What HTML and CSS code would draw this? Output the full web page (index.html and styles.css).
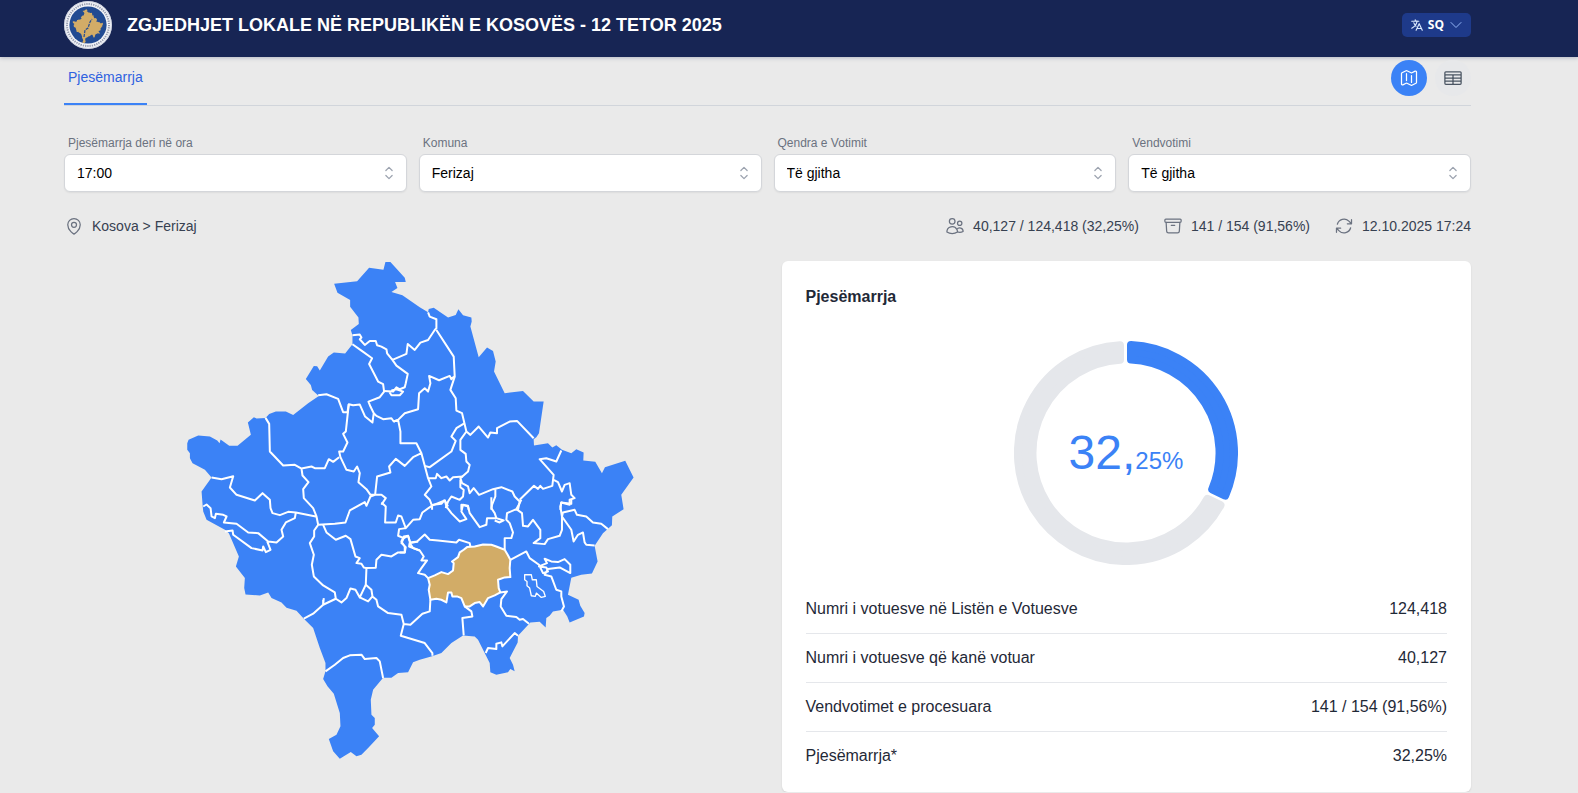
FILE: index.html
```html
<!DOCTYPE html>
<html lang="sq">
<head>
<meta charset="utf-8">
<meta name="viewport" content="width=device-width, initial-scale=1">
<title>Zgjedhjet Lokale në Republikën e Kosovës</title>
<link rel="stylesheet" href="styles.css">
</head>
<body>
<header class="header">
  <svg class="logo" viewBox="-24 -24 48 48" role="img" aria-label="Logo">
    <circle r="24" fill="#f3f4f8"/>
    <circle r="21" fill="none" stroke="#59627f" stroke-width="2" stroke-dasharray="1.3 1" opacity=".6"/>
    <circle r="23.4" fill="none" stroke="#b9bfd0" stroke-width=".6"/>
    <circle r="18.6" fill="#224b92"/>
    <g transform="translate(-15.8 -16.5) scale(.0227)"><use href="#kosovo" fill="#d2ac67"/></g>
    <path d="M-4 12l1-7 3-2 2-6 2-3" fill="none" stroke="#224b92" stroke-width="1.2" stroke-dasharray="3 1"/>
  </svg>
  <h1 class="title">ZGJEDHJET LOKALE NË REPUBLIKËN E KOSOVËS - 12 TETOR 2025</h1>
  <button class="lang" type="button" aria-haspopup="listbox">
    <svg class="icon lang-icon" viewBox="0 0 24 24"><path d="m10.5 21 5.25-11.25L21 21m-9-3h7.5M3 5.621a48.474 48.474 0 0 1 6-.371m0 0c1.12 0 2.233.038 3.334.114M9 5.25V3m3.334 2.364C11.176 10.658 7.69 15.08 3 17.502m9.334-12.138c.896.061 1.785.147 2.666.257m-4.589 8.495a18.023 18.023 0 0 1-3.827-5.802"/></svg>
    <span>SQ</span>
    <svg class="icon lang-chevron" viewBox="0 0 24 24"><path d="m19.5 8.25-7.5 7.5-7.5-7.5"/></svg>
  </button>
</header>
<main class="page">
  <div class="toolbar">
    <nav class="tabs"><a class="tab" href="#turnout">Pjesëmarrja</a></nav>
    <div class="views">
      <button class="view view-active" type="button" aria-label="Harta"><svg class="icon" viewBox="0 0 24 24"><path d="M9 6.75V15m6-6v8.25m.503 3.498 4.875-2.437c.381-.19.622-.58.622-1.006V4.82c0-.836-.88-1.38-1.628-1.006l-3.869 1.934c-.317.159-.69.159-1.006 0L9.503 3.252a1.125 1.125 0 0 0-1.006 0L3.622 5.689C3.24 5.88 3 6.27 3 6.695V19.18c0 .836.88 1.38 1.628 1.006l3.869-1.934c.317-.159.69-.159 1.006 0l4.994 2.497c.317.158.69.158 1.006 0Z"/></svg></button>
      <button class="view" type="button" aria-label="Tabela"><svg class="icon" viewBox="0 0 24 24"><path d="M3.375 19.5h17.25m-17.25 0a1.125 1.125 0 0 1-1.125-1.125M3.375 19.5h7.5c.621 0 1.125-.504 1.125-1.125m-9.75 0V5.625m0 12.75v-1.5c0-.621.504-1.125 1.125-1.125m18.375 2.625V5.625m0 12.75c0 .621-.504 1.125-1.125 1.125m1.125-1.125v-1.5c0-.621-.504-1.125-1.125-1.125m0 3.75h-7.5A1.125 1.125 0 0 1 12 18.375m9.75-12.75c0-.621-.504-1.125-1.125-1.125H3.375c-.621 0-1.125.504-1.125 1.125m19.5 0v1.5c0 .621-.504 1.125-1.125 1.125M2.25 5.625v1.5c0 .621.504 1.125 1.125 1.125m0 0h17.25m-17.25 0h7.5c.621 0 1.125.504 1.125 1.125M3.375 8.25c-.621 0-1.125.504-1.125 1.125v1.5c0 .621.504 1.125 1.125 1.125m17.25-3.75h-7.5c-.621 0-1.125.504-1.125 1.125m8.625-1.125c.621 0 1.125.504 1.125 1.125v1.5c0 .621-.504 1.125-1.125 1.125m-17.25 0h7.5m-7.5 0c-.621 0-1.125.504-1.125 1.125v1.5c0 .621.504 1.125 1.125 1.125M12 10.875v-1.5m0 1.5c0 .621-.504 1.125-1.125 1.125M12 10.875c0 .621.504 1.125 1.125 1.125m-2.25 0c.621 0 1.125.504 1.125 1.125M13.125 12h7.5m-7.5 0c-.621 0-1.125.504-1.125 1.125M20.625 12c.621 0 1.125.504 1.125 1.125v1.5c0 .621-.504 1.125-1.125 1.125m-17.25 0h7.5M12 14.625v-1.5m0 1.5c0 .621-.504 1.125-1.125 1.125M12 14.625c0 .621.504 1.125 1.125 1.125m-2.25 0c.621 0 1.125.504 1.125 1.125m0 1.5v-1.5m0 0c0-.621.504-1.125 1.125-1.125m0 0h7.5"/></svg></button>
    </div>
  </div>

  <form class="filters">
    <div class="field"><label for="hour">Pjesëmarrja deri në ora</label>
      <div class="control"><select id="hour"><option>17:00</option></select><svg class="icon updown" viewBox="0 0 24 24"><path d="M8.25 15 12 18.75 15.75 15m-7.5-6L12 5.25 15.75 9"/></svg></div></div>
    <div class="field"><label for="municipality">Komuna</label>
      <div class="control"><select id="municipality"><option>Ferizaj</option></select><svg class="icon updown" viewBox="0 0 24 24"><path d="M8.25 15 12 18.75 15.75 15m-7.5-6L12 5.25 15.75 9"/></svg></div></div>
    <div class="field"><label for="center">Qendra e Votimit</label>
      <div class="control"><select id="center"><option>Të gjitha</option></select><svg class="icon updown" viewBox="0 0 24 24"><path d="M8.25 15 12 18.75 15.75 15m-7.5-6L12 5.25 15.75 9"/></svg></div></div>
    <div class="field"><label for="station">Vendvotimi</label>
      <div class="control"><select id="station"><option>Të gjitha</option></select><svg class="icon updown" viewBox="0 0 24 24"><path d="M8.25 15 12 18.75 15.75 15m-7.5-6L12 5.25 15.75 9"/></svg></div></div>
  </form>

  <div class="summary">
    <div class="fact place"><svg class="icon" viewBox="0 0 24 24"><path d="M15 10.5a3 3 0 1 1-6 0 3 3 0 0 1 6 0Z"/><path d="M19.5 10.5c0 7.142-7.5 11.25-7.5 11.25S4.5 17.642 4.5 10.5a7.5 7.5 0 1 1 15 0Z"/></svg><span>Kosova &gt; Ferizaj</span></div>
    <div class="fact"><svg class="icon" viewBox="0 0 24 24"><path d="M15 19.128a9.38 9.38 0 0 0 2.625.372 9.337 9.337 0 0 0 4.121-.952 4.125 4.125 0 0 0-7.533-2.493M15 19.128v-.003c0-1.113-.285-2.16-.786-3.07M15 19.128v.106A12.318 12.318 0 0 1 8.624 21c-2.331 0-4.512-.645-6.374-1.766l-.001-.109a6.375 6.375 0 0 1 11.964-3.07M12 6.375a3.375 3.375 0 1 1-6.75 0 3.375 3.375 0 0 1 6.75 0Zm8.25 2.25a2.625 2.625 0 1 1-5.25 0 2.625 2.625 0 0 1 5.25 0Z"/></svg><span>40,127 / 124,418 (32,25%)</span></div>
    <div class="fact"><svg class="icon" viewBox="0 0 24 24"><path d="m20.25 7.5-.625 10.632a2.25 2.25 0 0 1-2.247 2.118H6.622a2.25 2.25 0 0 1-2.247-2.118L3.75 7.5M10 11.25h4M3.375 7.5h17.25c.621 0 1.125-.504 1.125-1.125v-1.5c0-.621-.504-1.125-1.125-1.125H3.375c-.621 0-1.125.504-1.125 1.125v1.5c0 .621.504 1.125 1.125 1.125Z"/></svg><span>141 / 154 (91,56%)</span></div>
    <div class="fact"><svg class="icon" viewBox="0 0 24 24"><path d="M16.023 9.348h4.992v-.001M2.985 19.644v-4.992m0 0h4.992m-4.993 0 3.181 3.183a8.25 8.25 0 0 0 13.803-3.7M4.031 9.865a8.25 8.25 0 0 1 13.803-3.7l3.181 3.182m0-4.991v4.99"/></svg><span>12.10.2025 17:24</span></div>
  </div>

  <div class="content">
    <svg class="map" viewBox="-348 33 2070 1500" role="img" aria-label="Harta e Kosovës">
      <defs>
        <path id="kosovo" d="M22 580L26 570 55 557 90 560 112 572 119 580 122 569 148 588 173 588 213 555 204 518 222 502 230 506 257 504 268 492 288 485 318 485 340 495 385 460 417 438 397 420 393 405 378 387 402 348 412 349 420 362 445 320 462 308 496 311 518 283 518 256 513 240 537 222 536 203 511 170 511 150 473 128 463 101 532 94 568 53 611 59 617 36 632 36 675 83 678 96 646 96 653 114 635 126 668 136 720 172 745 187 747 177 762 173 805 203 828 195 836 178 850 196 875 203 876 215 872 230 897 322 922 293 940 303 948 335 943 365 975 430 1030 423 1062 455 1092 455 1078 550 1070 562 1062 568 1063 587 1105 580 1118 593 1130 586 1147 600 1175 610 1190 598 1212 608 1211 632 1247 636 1267 670 1276 652 1337 633 1362 683 1325 735 1332 778 1298 800 1297 826 1270 850 1245 888 1254 935 1237 971 1205 975 1175 984 1165 1035 1197 1050 1202 1068 1215 1090 1213 1100 1170 1118 1163 1100 1150 1080 1120 1085 1110 1098 1100 1105 1098 1133 1080 1116 1052 1118 1015 1158 1014 1178 990 1225 1000 1245 1005 1265 992 1258 985 1268 950 1275 932 1268 930 1240 895 1170 885 1160 850 1157 815 1180 785 1210 757 1220 720 1230 700 1238 685 1268 655 1270 635 1284 610 1284 580 1320 573 1350 575 1395 585 1405 585 1425 577 1435 598 1460 565 1495 545 1515 530 1520 513 1507 480 1527 460 1505 447 1468 470 1455 482 1430 480 1390 462 1332 443 1310 430 1288 437 1265 437 1240 420 1195 400 1135 372 1107 350 1083 320 1074 305 1058 275 1045 265 1028 240 1037 197 1034 193 1015 195 985 168 950 177 920 147 850 135 840 80 810 70 785 68 765 65 725 95 683 75 660 38 640 30 625 30 610 22 600Z"/>
      </defs>
      <use href="#kosovo" fill="#3b82f6"/>
      <path class="selected" d="M745 985L765 977 785 967 805 973 820 962 822 940 817 935 835 922 840 908 852 900 862 892 885 890 910 884 935 885 950 890 975 900 984 915 992 930 990 955 992 982 975 983 955 990 957 1015 962 1028 945 1037 925 1045 910 1070 900 1057 885 1060 870 1070 855 1070 845 1045 832 1040 818 1040 815 1028 805 1028 800 1058 785 1050 770 1047 752 1050 747 1020 750 1005Z"/>
      <g class="borders">
        <path d="M518 256L540 254 545 263 540 268 555 285 570 273 588 273 592 286 605 290 620 298 622 310 638 330 680 312 684 282 705 300 722 278 745 270 765 240 770 235 770 208 750 200 745 187M638 330L650 347 684 372 678 400 675 412 660 418 650 412 640 425 612 423M628 425L635 436 660 436 670 425 650 418 635 422"/>
        <path d="M518 283L545 302 577 325 568 342 595 395 610 403 613 425 600 442 566 455 572 470 582 490 578 518 556 500 540 464 520 466 507 463 503 487 490 487 475 447 440 433 415 436M582 490L590 498 610 508 635 505 642 515 655 510 675 490 715 478 718 430 735 415 745 425 752 400 748 378 778 391 810 378 815 388 823 380"/>
        <path d="M642 515L655 510 662 545 662 580 710 580 725 610 735 648 750 652 815 605 828 573 815 560 830 535 855 520M725 610L700 622 675 648 648 627 628 650 632 668 592 680 586 735M507 463L498 545 490 552 503 578 490 605 478 605 482 622 500 660 522 665 532 650 540 670 536 697 560 718 572 735 586 735"/>
        <path d="M257 504L268 522 270 605 310 647 345 645 365 656 395 650 405 655 435 655 447 628 460 636 478 622M365 656L368 677 386 697 370 718 372 745 400 775 410 800 415 825M95 683L125 688 160 679 150 713 170 735 225 752 248 730 270 750 272 775 278 790 300 796 325 786 348 788 408 800M586 735L572 740 560 768 555 757 510 782 497 818 465 822 415 825M586 735L605 735 618 745 605 765"/>
      </g>
      <g class="borders" transform="translate(0 750)">
        <path d="M605 8L618 20 616 68 648 68 655 47 665 50 678 85 700 60 720 58 728 38 760 15 785 12 795 0M678 85L658 88 655 108 672 115 665 130 678 142 675 158 655 158 635 170 605 165 590 180 588 204 560 205 558 255 540 293 527 270 512 266 500 295 485 308 468 297 430 315 432 295M430 300L430 315 400 342 372 357"/>
        <path d="M430 75L440 98 468 120 498 108 512 118 527 170 540 175 530 190 545 192 552 203 560 205M415 75L403 92 403 110 390 130 402 165 396 195 402 230 430 257 465 278 468 297M558 255L575 270 578 290 565 305 540 293M578 290L590 300 595 320 625 340 665 345 672 373 692 375 728 342 750 335 752 300M672 373L663 408 735 430 758 460 758 468"/>
        <path d="M437 515L465 495 490 475 510 467 545 465 555 478 590 475 600 485 610 535M70 20L80 14 92 25 95 50 105 55 108 42 130 45 140 50 132 68 170 72 205 98 235 100 265 125 290 128 310 110 305 90 318 68 345 55 348 38M135 95L158 92 160 105 215 145 248 152 250 140 258 157 272 150 262 125M672 115L685 108 692 130 715 125M690 130L700 145 720 152"/>
      </g>
      <g class="borders" transform="translate(660 750)">
        <path d="M30 128L52 125 75 104 90 120 115 122 170 128 178 120 210 130 212 140M30 128L28 140 60 152 72 170 65 182 82 182 65 205 55 220 75 225 85 235M30 125L25 108 12 110 5 125 15 140 15 158 0 158M195 320L215 335 218 350 188 355 192 407M302 278L322 275 305 298 303 320 320 348 350 352 360 360 370 358 388 372M258 460L265 445 290 448 290 432 305 428 308 440 345 400 355 408"/>
        <path d="M315 150L315 115 335 115 340 98 330 70 320 60 322 40 350 28 360 10 365 0M350 28L367 40 370 78 385 80 400 60 422 90 422 115 402 130 435 133 445 118 480 108 487 90 487 50 515 90 522 125 535 105 550 98 555 128 560 135 585 137M487 50L490 38 525 30 532 45 560 50 580 68 605 72 625 88M487 50L482 20 485 8 515 12 515 0"/>
        <path d="M332 180L380 155 390 175 418 195 430 220 445 215 440 203 418 200 442 190 435 177 455 185 475 187 495 178 512 195 512 220 480 203 445 208 435 225 455 230 470 270 485 275 485 290 493 320 485 335M135 0L140 20 155 40 180 65 200 58 185 35 190 15 205 20 210 40 240 82 260 75 262 55 290 55 312 62 300 68 285 62M275 -8L275 25 285 40 290 55"/>
        <path class="thin" d="M375 225L395 225 398 240 410 240 412 260 432 275 437 290 425 293 410 280 407 290 395 288 390 265 382 258 382 245 375 240Z"/>
      </g>
      <g class="borders" transform="translate(660 0)">
        <path d="M110 240L162 320 165 380 152 420 168 445 170 482 187 490 200 545 212 555 237 530 265 563 272 548 292 550 292 535 330 515 352 513 402 565M200 545L182 570 182 600 198 612 200 635 210 645 205 665 182 685 187 700 205 710 210 730 222 715 238 735 280 718 305 712 338 725 345 740 360 755 355 780"/>
        <path d="M287 718L287 740 277 765 275 780M360 750L403 708 415 717 422 708 430 717 458 708 462 675 420 628 440 625 470 635 485 602M462 690L475 697 487 725 495 705 510 700 515 735 525 745 510 750 510 765 485 758 482 780"/>
        <path d="M75 648L85 685 108 685 112 672 125 685 140 680 150 692 160 682 190 680M85 685L95 710 75 735 90 750 97 768 97 780M95 768L135 752 145 770M182 690L182 712 192 720 190 740 180 750 155 740 145 755 138 775M185 780L185 765 205 768 207 780"/>
      </g>
    </svg>

    <section class="card" id="turnout">
      <h2 class="card-title">Pjesëmarrja</h2>
      <svg class="donut" viewBox="-112 -112 224 224" role="img" aria-label="Pjesëmarrja 32,25%">
        <path class="rest" d="M94.5 52.2A108 108 0 1 1 -6 -107.8L-6 -93.3A93.5 93.5 0 1 0 81.5 45.8Z"/>
        <path class="part" d="M5 -107.9A108 108 0 0 1 99.2 42.7L86.2 36.3A93.5 93.5 0 0 0 5 -93.4Z"/>
        <text class="percent" x="0" y="16" text-anchor="middle">32,<tspan class="decimals">25%</tspan></text>
      </svg>
      <table class="results">
        <tbody>
          <tr><th scope="row">Numri i votuesve në Listën e Votuesve</th><td>124,418</td></tr>
          <tr><th scope="row">Numri i votuesve që kanë votuar</th><td>40,127</td></tr>
          <tr><th scope="row">Vendvotimet e procesuara</th><td>141 / 154 (91,56%)</td></tr>
          <tr><th scope="row">Pjesëmarrja*</th><td>32,25%</td></tr>
        </tbody>
      </table>
    </section>
  </div>
</main>
</body>
</html>
```
FILE: styles.css
```css
* { box-sizing: border-box; }
body {
  margin: 0;
  background: #eaeaea;
  color: #1f2937;
  font: 14px/20px "Liberation Sans", Arial, sans-serif;
}
button, select { font: inherit; }

.icon {
  display: block;
  width: 20px;
  height: 20px;
  flex: none;
  fill: none;
  stroke: currentColor;
  stroke-width: 1.5;
  stroke-linecap: round;
  stroke-linejoin: round;
}

.header {
  display: flex;
  align-items: center;
  padding: 1px 107px 8px 64px;
  background: #172554;
  box-shadow: 0 1px 4px rgba(23, 37, 84, .25);
}
.logo { width: 48px; height: 48px; flex: none; }
.title {
  margin: 0 auto 0 15px;
  color: #fff;
  font-size: 18px;
  line-height: 28px;
  font-weight: 700;
}
.lang {
  display: flex;
  align-items: center;
  gap: 4px;
  height: 24px;
  padding: 0 7px 0 8px;
  border: 0;
  border-radius: 5px;
  background: #1e3a8a;
  color: #fff;
  font: 700 12px/16px "Open Sans", "Noto Sans", sans-serif;
}
.lang-icon { width: 14px; height: 14px; color: #dbeafe; stroke-width: 2; }
.lang-chevron { width: 16px; height: 16px; color: #93b4f5; }

.page { padding: 0 107px 0 64px; }
.toolbar {
  display: flex;
  justify-content: space-between;
  height: 49px;
  border-bottom: 1px solid #d1d5db;
}
.tabs { display: flex; }
.tab {
  padding: 10px 4px 16px;
  border-bottom: 2px solid #3b82f6;
  color: #2f62e0;
  text-decoration: none;
}
.views { display: flex; gap: 8px; padding-top: 3px; }
.view {
  display: grid;
  place-items: center;
  width: 36px;
  height: 36px;
  padding: 0;
  border: 0;
  border-radius: 50%;
  background: #e7e8ea;
  color: #4b5563;
}
.view-active { background: #3b82f6; color: #fff; }

.filters {
  display: grid;
  grid-template-columns: repeat(4, 1fr);
  gap: 12px;
  padding-top: 29px;
}
.field label {
  display: block;
  padding: 0 4px 3px;
  color: #6b7280;
  font-size: 12px;
  line-height: 16px;
}
.control { display: grid; align-items: center; }
.control > * { grid-area: 1 / 1; }
.control select {
  width: 100%;
  height: 38px;
  padding: 0 12px;
  border: 1px solid #d4d6da;
  border-radius: 6px;
  background: #fff;
  box-shadow: 0 1px 2px rgba(0, 0, 0, .06);
  color: #000;
  appearance: none;
}
.updown {
  justify-self: end;
  margin-right: 8px;
  color: #9ca3af;
  pointer-events: none;
}

.summary {
  display: flex;
  gap: 24px;
  padding: 24px 0 25px;
  color: #374151;
}
.fact { display: flex; align-items: center; gap: 8px; }
.fact .icon { color: #6b7280; }
.place { margin-right: auto; }

.content {
  display: grid;
  grid-template-columns: 1fr 1fr;
  gap: 28px;
  align-items: start;
}
.map { display: block; width: 100%; }
.selected { fill: #d2ac67; stroke: #fff; stroke-width: 6; stroke-linejoin: round; }
.borders { fill: none; stroke: #fff; stroke-width: 6; stroke-linejoin: round; }
.thin { stroke-width: 4; }

.card {
  padding: 24px 24px 12px;
  border-radius: 6px;
  background: #fff;
  box-shadow: 0 1px 2px rgba(0, 0, 0, .1);
}
.card-title {
  margin: 0;
  font-size: 16px;
  line-height: 24px;
  font-weight: 700;
}
.donut { display: block; width: 224px; margin: 32px auto 20px; }
.rest, .part { stroke-width: 8; stroke-linejoin: round; }
.rest { fill: #e5e7eb; stroke: #e5e7eb; }
.part { fill: #3b82f6; stroke: #3b82f6; }
.percent { fill: #3b82f6; font-size: 48px; }
.decimals { font-size: 24px; }

.results {
  width: 100%;
  border-collapse: collapse;
  font-size: 16px;
  line-height: 24px;
}
.results th, .results td { padding: 12px 0; font-weight: 400; }
.results th { text-align: left; }
.results td { text-align: right; }
.results tr + tr { border-top: 1px solid #e5e7eb; }
```
